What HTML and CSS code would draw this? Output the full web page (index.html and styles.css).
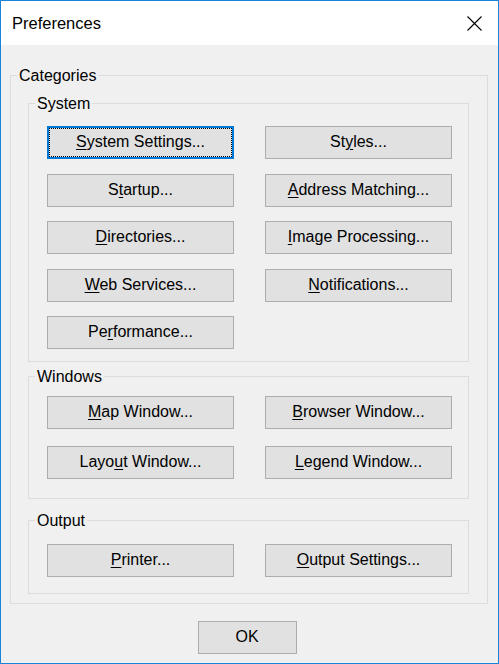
FILE: index.html
```html
<!DOCTYPE html>
<html lang="en">
<head>
  <meta charset="UTF-8">
  <meta name="viewport" content="width=device-width, initial-scale=1.0">
  <title>Preferences</title>
  <link rel="stylesheet" href="styles.css">
</head>
<body>

  <div class="window">
    <div class="title-bar">
      <span class="title">Preferences</span>
      <svg class="close" width="15" height="15" viewBox="0 0 15 15">
        <path d="M0.5 0.5 L14.5 14.5 M14.5 0.5 L0.5 14.5" stroke="#000" stroke-width="1.1" fill="none"/>
      </svg>
    </div>

    <div class="dialog-body">
      <fieldset class="group">
        <legend>Categories</legend>
        <div class="categories">

          <fieldset class="group">
            <legend>System</legend>
            <div class="buttons system">
              <button class="btn focused"><u>S</u>ystem Settings...</button>
              <button class="btn">St<u>y</u>les...</button>
              <button class="btn">S<u>t</u>artup...</button>
              <button class="btn"><u>A</u>ddress Matching...</button>
              <button class="btn"><u>D</u>irectories...</button>
              <button class="btn"><u>I</u>mage Processing...</button>
              <button class="btn"><u>W</u>eb Services...</button>
              <button class="btn"><u>N</u>otifications...</button>
              <button class="btn">Pe<u>r</u>formance...</button>
            </div>
          </fieldset>

          <fieldset class="group windows">
            <legend>Windows</legend>
            <div class="buttons windows-buttons">
              <button class="btn"><u>M</u>ap Window...</button>
              <button class="btn"><u>B</u>rowser Window...</button>
              <button class="btn">Layo<u>u</u>t Window...</button>
              <button class="btn"><u>L</u>egend Window...</button>
            </div>
          </fieldset>

          <fieldset class="group output">
            <legend>Output</legend>
            <div class="buttons output-buttons">
              <button class="btn"><u>P</u>rinter...</button>
              <button class="btn"><u>O</u>utput Settings...</button>
            </div>
          </fieldset>

        </div>
      </fieldset>

      <div class="footer">
        <button class="btn ok">OK</button>
      </div>
    </div>
  </div>

</body>
</html>
```

FILE: styles.css
```css
* {
  margin: 0;
  padding: 0;
  box-sizing: border-box;
}

body {
  font-family: "Liberation Sans", Arial, sans-serif;
  font-size: 16px;
  color: #000;
  background-color: #f0f0f0;
}

.window {
  width: 499px;
  height: 664px;
  border: 1px solid #1883d7;
  border-top-width: 0;
  background-color: #f0f0f0;
  display: flex;
  flex-direction: column;
}

.title-bar {
  height: 45px;
  background-color: #fff;
  border-top: 1px solid #1883d7;
  display: flex;
  align-items: center;
  justify-content: space-between;
  padding: 0 16px 0 11px;
}

.title {
  font-size: 16.5px;
  padding-top: 1px;
}

.close {
  display: block;
}

.dialog-body {
  padding: 21px 10px 0 9px;
}

/* group boxes */
.group {
  border: 1px solid #dcdcdc;
  padding: 0;
  min-width: 0;
}

.group legend {
  margin-left: 6px;
  padding: 1px 2px 0;
  line-height: 18px;
}

.categories {
  padding: 9px 18px 9px 17px;
}

.windows {
  margin-top: 5px;
}

.output {
  margin-top: 12px;
}

.buttons {
  display: grid;
  grid-template-columns: 187px 187px;
  column-gap: 31px;
  padding: 13px 16px 12px 18px;
}

.system {
  row-gap: 14.5px;
}

.windows-buttons {
  row-gap: 17px;
  padding-top: 10px;
  padding-bottom: 19px;
}

.output-buttons {
  padding-top: 14px;
  padding-bottom: 16px;
}

/* push buttons */
.btn {
  height: 33px;
  font-family: inherit;
  font-size: 16px;
  color: #000;
  background-color: #e1e1e1;
  border: 1px solid #adadad;
  padding-bottom: 1px;
  text-align: center;
}

.btn u {
  text-underline-offset: 2px;
}

.btn.focused {
  border: 2px solid #0078d7;
  outline: 1px dotted #000;
  outline-offset: -3px;
}

.footer {
  display: flex;
  justify-content: center;
  padding: 17px 4px 0 0;
}

.ok {
  width: 99px;
}
```
